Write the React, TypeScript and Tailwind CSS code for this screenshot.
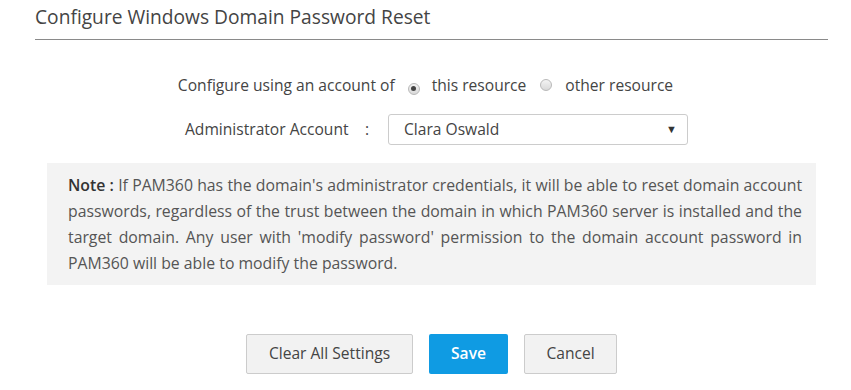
import React from "react";

function Radio({ checked }: { checked?: boolean }) {
  return (
    <span className="inline-flex items-center justify-center w-[12px] h-[12px] rounded-full border border-[#b9b9b9] bg-gradient-to-b from-[#f4f4f4] to-[#d9d9d9] shrink-0">
      {checked && <span className="w-[5px] h-[5px] rounded-full bg-[#444]" />}
    </span>
  );
}

export default function App() {
  return (
    <div
      className="w-[851px] h-[390px] bg-white text-[#444] overflow-hidden"
      style={{ fontFamily: "'Open Sans', 'Liberation Sans', sans-serif" }}
    >
      <div className="pl-[35px] pr-[23px]">
        <div className="h-[40px] border-b border-[#8a8a8a] pt-[4px] text-[19.2px] leading-[26px] text-[#444]">
          Configure Windows Domain Password Reset
        </div>
      </div>

      <div className="flex justify-center items-center mt-[33px] text-[15.6px] leading-[24px] text-[#444]">
        <span>Configure using an account of</span>
        <span className="ml-[13px] mr-[12px]"><Radio checked /></span>
        <span>this resource</span>
        <span className="ml-[14px] mr-[13px]"><Radio /></span>
        <span>other resource</span>
      </div>

      <div className="flex items-center pl-[185px] mt-[17px] text-[15.6px] text-[#444]">
        <span className="w-[180px]">Administrator Account</span>
        <span className="w-[23px]">:</span>
        <div className="w-[300px] h-[31px] border border-[#ccc] rounded-[3px] flex items-center justify-between pl-[15px] pr-[10px]">
          <span>Clara Oswald</span>
          <span className="text-[11px] text-[#333]">▼</span>
        </div>
      </div>

      <div className="ml-[47px] w-[769px] h-[122px] mt-[18px] bg-[#f3f3f3] pl-[21px] pr-[14px] pt-[9px] text-[15.8px] leading-[26px] text-[#555] text-justify">
        <span className="font-semibold text-[#333]">Note :</span> If PAM360 has the domain's administrator credentials, it will be able to reset domain account passwords, regardless of the trust between the domain in which PAM360 server is installed and the target domain. Any user with 'modify password' permission to the domain account password in PAM360 will be able to modify the password.
      </div>

      <div className="flex justify-center gap-[16px] pl-[12px] mt-[49px] text-[15.6px]">
        <button className="w-[167px] h-[40px] bg-[#f2f2f2] border border-[#ccc] rounded-[2px] text-[#444]">
          Clear All Settings
        </button>
        <button className="w-[79px] h-[40px] bg-[#0f9be3] rounded-[2px] text-white font-semibold">
          Save
        </button>
        <button className="w-[93px] h-[40px] bg-[#f2f2f2] border border-[#ccc] rounded-[2px] text-[#444]">
          Cancel
        </button>
      </div>
    </div>
  );
}
